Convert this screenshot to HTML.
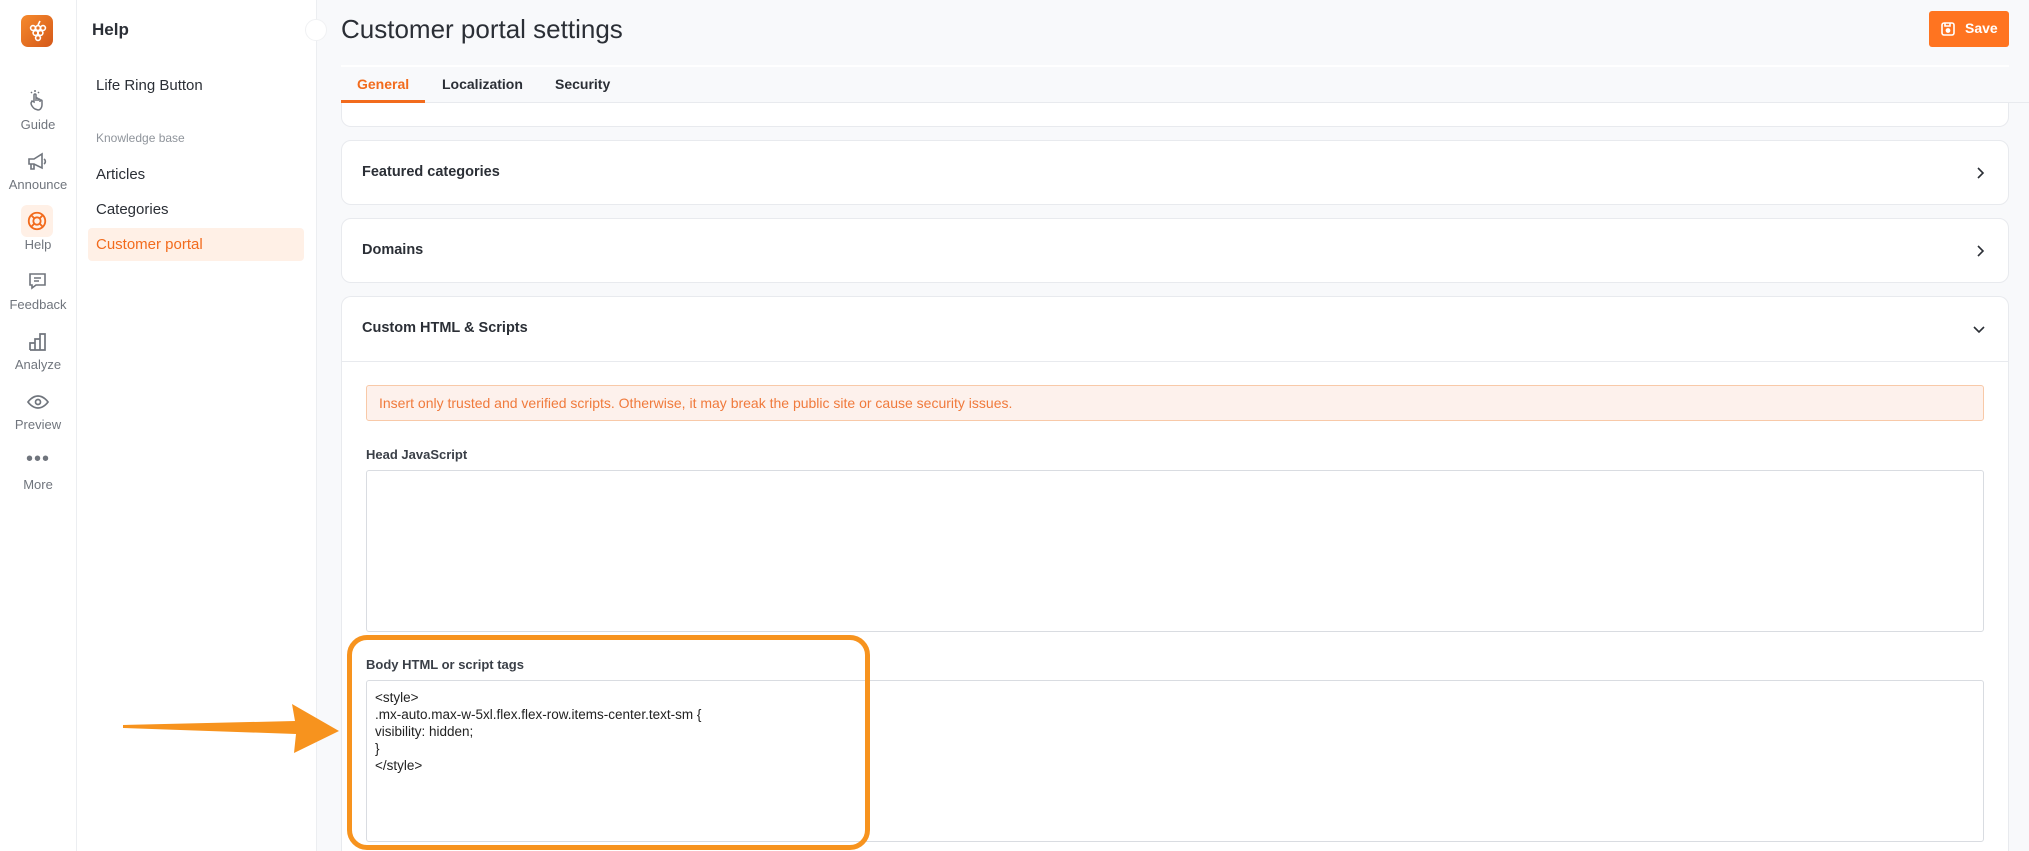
<!DOCTYPE html>
<html style="width:2029px;height:851px;overflow:hidden"><head><meta charset="utf-8"><style>
*{box-sizing:border-box;margin:0;padding:0}
body{width:2029px;height:851px;overflow:hidden;background:#f8f9fb;font-family:"Liberation Sans",sans-serif;color:#2b2f36;position:relative}
.abs{position:absolute}
.rail{left:0;top:0;width:77px;height:851px;background:#fff;border-right:1px solid #eceef1}
.side{left:77px;top:0;width:240px;height:851px;background:#fff;border-right:1px solid #eceef1}
.ri{position:absolute;left:0;width:76px;text-align:center;font-size:13px;color:#70757d}
.card{position:absolute;left:341px;width:1668px;background:#fff;border:1px solid #e8eaee;border-radius:10px}
.ch{position:absolute;left:20px;font-size:14.5px;font-weight:bold;color:#2b2f36}
.chev{position:absolute;right:22px}
.lbl{position:absolute;left:366px;font-size:13px;font-weight:bold;color:#3a3f47}
.ta{position:absolute;left:366px;width:1618px;background:#fff;border:1px solid #d9dce1;border-radius:3px}
.code{position:absolute;left:375px;font-size:13.5px;color:#222;line-height:17px}
</style></head><body>
<div class="abs rail"></div>
<div class="abs" style="left:21px;top:15px;width:32px;height:32px;border-radius:7px;background:linear-gradient(135deg,#f68a2c,#d4581a)"></div>
<svg class="abs" style="left:21px;top:15px" width="32" height="32" viewBox="0 0 32 32" fill="none" stroke="#fff" stroke-width="1.6"><circle cx="12" cy="13" r="2.4"/><circle cx="17" cy="13" r="2.4"/><circle cx="22" cy="13" r="2.4"/><circle cx="14.5" cy="18" r="2.4"/><circle cx="19.5" cy="18" r="2.4"/><circle cx="17" cy="23" r="2.4"/><path d="M17 10 L19 6"/></svg>

<svg class="abs" style="left:26px;top:88px" width="24" height="24" viewBox="0 0 24 24" fill="none" stroke="#70757d" stroke-width="1.5"><path d="M9 21c-2-1-4-4-4-6l1-2 2 1V7a1 1 0 012 0v6-2a1 1 0 012 0v2-1a1 1 0 012 0v2-1a1 1 0 012 0v4c0 3-2 5-4 5z"/><path d="M9 2v2M5 4l1 1M13 4l-1 1"/></svg>
<div class="ri" style="top:117px">Guide</div>
<svg class="abs" style="left:26px;top:150px" width="24" height="24" viewBox="0 0 24 24" fill="none" stroke="#70757d" stroke-width="1.6"><path d="M3 9h5l8-5v14l-8-4H3z"/><path d="M5 14v5h3v-5M18 9a3 3 0 010 5"/></svg>
<div class="ri" style="top:177px">Announce</div>
<div class="abs" style="left:21px;top:205px;width:32px;height:32px;border-radius:6px;background:#fff0e6"></div>
<svg class="abs" style="left:26px;top:210px" width="22" height="22" viewBox="0 0 24 24" fill="none" stroke="#f26b1d" stroke-width="2"><circle cx="12" cy="12" r="9"/><circle cx="12" cy="12" r="4"/><path d="M5.6 5.6l3.6 3.6M18.4 5.6l-3.6 3.6M5.6 18.4l3.6-3.6M18.4 18.4l-3.6-3.6"/></svg>
<div class="ri" style="top:237px">Help</div>
<svg class="abs" style="left:26px;top:270px" width="24" height="24" viewBox="0 0 24 24" fill="none" stroke="#70757d" stroke-width="1.6"><path d="M4 4h15v11h-9l-4 3v-3H4z"/><path d="M8 8h7M8 11h5"/></svg>
<div class="ri" style="top:297px">Feedback</div>
<svg class="abs" style="left:26px;top:330px" width="24" height="24" viewBox="0 0 24 24" fill="none" stroke="#70757d" stroke-width="1.7"><path d="M4 20V13h5v7M9 20V9h5v11M14 20V4h5v16H4"/></svg>
<div class="ri" style="top:357px">Analyze</div>
<svg class="abs" style="left:26px;top:390px" width="24" height="24" viewBox="0 0 24 24" fill="none" stroke="#70757d" stroke-width="1.7"><path d="M2 12s4-6 10-6 10 6 10 6-4 6-10 6S2 12 2 12z"/><circle cx="12" cy="12" r="2.5"/></svg>
<div class="ri" style="top:417px">Preview</div>
<div class="ri" style="top:448px;font-size:20px;letter-spacing:1px;color:#70757d">•••</div>
<div class="ri" style="top:477px">More</div>

<div class="abs side"></div>
<div class="abs" style="left:92px;top:20px;font-size:17px;font-weight:bold">Help</div>
<div class="abs" style="left:305px;top:19px;width:22px;height:22px;border-radius:50%;border:1px solid #f0f1f3;background:#fff"></div>
<div class="abs" style="left:96px;top:77px;font-size:15px">Life Ring Button</div>
<div class="abs" style="left:96px;top:131px;font-size:12px;color:#8f949b">Knowledge base</div>
<div class="abs" style="left:96px;top:166px;font-size:15px">Articles</div>
<div class="abs" style="left:96px;top:201px;font-size:15px">Categories</div>
<div class="abs" style="left:88px;top:228px;width:216px;height:33px;border-radius:4px;background:#fff0e6"></div>
<div class="abs" style="left:96px;top:236px;font-size:15px;color:#f26b1d">Customer portal</div>

<div class="abs" style="left:341px;top:14px;font-size:26px;color:#2b2f36">Customer portal settings</div>
<div class="abs" style="left:1929px;top:11px;width:80px;height:36px;border-radius:3px;background:#ff7420"></div>
<svg class="abs" style="left:1941px;top:22px" width="14" height="14" viewBox="0 0 14 14" fill="none" stroke="#fff" stroke-width="1.6"><rect x="1" y="1" width="12" height="12" rx="2"/><circle cx="7" cy="8.5" r="1.6" fill="#fff"/><path d="M4 1v3h5V1"/></svg>
<div class="abs" style="left:1965px;top:20px;font-size:14px;font-weight:bold;color:#fff">Save</div>
<div class="abs" style="left:341px;top:65px;width:1668px;height:2px;background:#fff"></div>
<div class="abs" style="left:341px;top:102px;width:1688px;height:1px;background:#e8eaee"></div>
<div class="abs" style="left:357px;top:76px;font-size:14px;font-weight:bold;color:#f26b1d">General</div>
<div class="abs" style="left:442px;top:76px;font-size:14px;font-weight:bold">Localization</div>
<div class="abs" style="left:555px;top:76px;font-size:14px;font-weight:bold">Security</div>
<div class="abs" style="left:341px;top:100px;width:84px;height:3px;background:#f26b1d"></div>

<div class="card" style="top:103px;height:24px;border-top:none;border-radius:0 0 10px 10px"></div>
<div class="card" style="top:140px;height:65px"><div class="ch" style="top:23px">Featured categories</div><svg class="chev" style="top:25px" width="12" height="14" viewBox="0 0 12 14" fill="none" stroke="#2b2f36" stroke-width="1.6"><path d="M4 2l5 5-5 5"/></svg></div>
<div class="card" style="top:218px;height:65px"><div class="ch" style="top:23px">Domains</div><svg class="chev" style="top:25px" width="12" height="14" viewBox="0 0 12 14" fill="none" stroke="#2b2f36" stroke-width="1.6"><path d="M4 2l5 5-5 5"/></svg></div>
<div class="card" style="top:296px;height:555px;border-bottom:none;border-radius:10px 10px 0 0"><div class="ch" style="top:23px">Custom HTML &amp; Scripts</div><svg class="chev" style="top:25px" width="14" height="14" viewBox="0 0 14 14" fill="none" stroke="#2b2f36" stroke-width="1.6"><path d="M2 5l5 5 5-5"/></svg><div style="position:absolute;left:0;right:0;top:64px;height:1px;background:#e8eaee"></div></div>

<div class="abs" style="left:366px;top:385px;width:1618px;height:36px;background:#fdf1ec;border:1px solid #f8c9a8;border-radius:3px"></div>
<div class="abs" style="left:379px;top:395px;font-size:14px;color:#f07a3c">Insert only trusted and verified scripts. Otherwise, it may break the public site or cause security issues.</div>
<div class="lbl" style="top:447px">Head JavaScript</div>
<div class="ta" style="top:470px;height:162px"></div>
<div class="lbl" style="top:657px">Body HTML or script tags</div>
<div class="ta" style="top:680px;height:162px"></div>
<div class="code" style="top:689px">&lt;style&gt;<br>.mx-auto.max-w-5xl.flex.flex-row.items-center.text-sm {<br>visibility: hidden;<br>}<br>&lt;/style&gt;</div>

<div class="abs" style="left:347px;top:635px;width:523px;height:215px;border:5px solid #f7931e;border-radius:20px"></div>
<svg class="abs" style="left:120px;top:695px" width="225" height="60" viewBox="0 0 225 60"><path d="M3 30 L175 26 L172 9 L219 36 L174 58 L176 39 L3 33 Z" fill="#f7931e"/></svg>
</body></html>
